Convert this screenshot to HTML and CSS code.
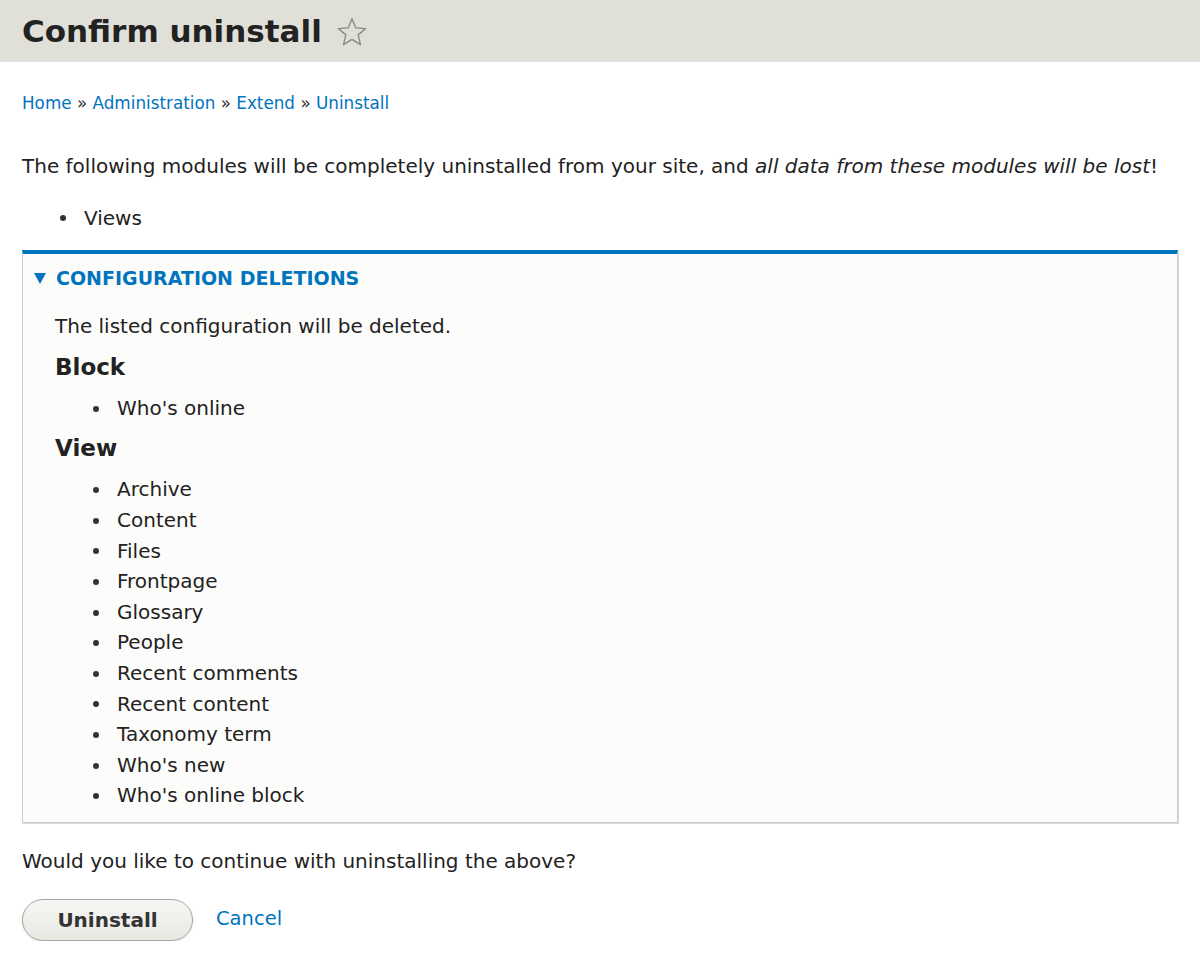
FILE: index.html
```html
<!DOCTYPE html>
<html>
<head>
<meta charset="utf-8">
<link rel="stylesheet" href="styles.css">
</head>
<body>
<header class="page-header">
  <h1 class="page-title">Confirm uninstall</h1>
  <svg class="star" width="30" height="30" viewBox="0 0 30 30" aria-hidden="true">
    <path d="M15 1.8 L18.8 10.9 L28.6 11.6 L21.1 17.9 L23.5 27.6 L15 22.4 L6.5 27.6 L8.9 17.9 L1.4 11.6 L11.2 10.9 Z" fill="none" stroke="#8a8a8a" stroke-width="1.4" stroke-linejoin="round"/>
  </svg>
</header>
<main class="content">
  <nav class="breadcrumb">
    <a href="#">Home</a> <span class="sep">»</span> <a href="#">Administration</a> <span class="sep">»</span> <a href="#">Extend</a> <span class="sep">»</span> <a href="#">Uninstall</a>
  </nav>
  <p class="intro">The following modules will be completely uninstalled from your site, and <em>all data from these modules will be lost</em>!</p>
  <ul class="list modules">
    <li>Views</li>
  </ul>
  <section class="details">
    <div class="summary"><span class="tri"></span>CONFIGURATION DELETIONS</div>
    <div class="details-body">
      <p class="desc">The listed configuration will be deleted.</p>
      <h3 class="group">Block</h3>
      <ul class="list">
        <li>Who's online</li>
      </ul>
      <h3 class="group">View</h3>
      <ul class="list">
        <li>Archive</li>
        <li>Content</li>
        <li>Files</li>
        <li>Frontpage</li>
        <li>Glossary</li>
        <li>People</li>
        <li>Recent comments</li>
        <li>Recent content</li>
        <li>Taxonomy term</li>
        <li>Who's new</li>
        <li>Who's online block</li>
      </ul>
    </div>
  </section>
  <p class="question">Would you like to continue with uninstalling the above?</p>
  <div class="actions">
    <button class="button" type="button">Uninstall</button>
    <a class="cancel" href="#">Cancel</a>
  </div>
</main>
</body>
</html>
```

FILE: styles.css
```css
html, body {
  margin: 0;
  padding: 0;
  background: #fff;
}
body {
  font-family: "DejaVu Sans", "Lucida Grande", Verdana, sans-serif;
  font-size: 20px;
  color: #222;
  line-height: 30.6px;
}
a {
  color: #0074bd;
  text-decoration: none;
}
.page-header {
  background: #e0e0d8;
  height: 62px;
  display: flex;
  align-items: center;
  padding: 0 22px;
  gap: 15px;
}
.page-title {
  margin: 0;
  font-size: 31px;
  font-weight: bold;
  color: #222;
  line-height: 1;
}
.star {
  display: block;
  margin-top: 1px;
}
.content {
  padding: 0 22px;
}
.breadcrumb {
  margin-top: 28px;
  font-size: 16.8px;
  line-height: 26px;
}
.breadcrumb .sep {
  color: #333;
}
.intro {
  margin: 35px 0 0;
}
.list {
  margin: 0;
  padding-left: 38px;
  list-style: none;
}
.list li {
  display: flex;
  align-items: center;
  line-height: 30.6px;
}
.list li::before {
  content: "";
  width: 6px;
  height: 6px;
  border-radius: 50%;
  background: #333;
  margin-right: 18px;
  margin-top: 1px;
  flex: none;
}
.modules {
  margin-top: 21px;
}
.details {
  margin-top: 17px;
  border: 1px solid #ccc;
  border-top: 4px solid #0074bd;
  background: #fcfcfa;
  box-shadow: 1px 1px 0 #d6d6d6;
}
.summary {
  display: flex;
  align-items: center;
  padding: 10px 11px 0;
  height: 38px;
  box-sizing: border-box;
  color: #0074bd;
  font-weight: bold;
  font-size: 19px;
}
.tri {
  width: 0;
  height: 0;
  border-left: 6px solid transparent;
  border-right: 6px solid transparent;
  border-top: 11px solid #0074bd;
  margin-right: 10px;
}
.details-body {
  padding: 19px 32px 11px;
}
.desc {
  margin: 0;
}
.group {
  margin: 5px 0 6px;
  font-size: 23px;
  font-weight: bold;
  line-height: 40px;
}
.question {
  margin: 23px 0 0;
}
.actions {
  margin-top: 22px;
  display: flex;
  align-items: center;
  gap: 23px;
}
.button {
  width: 171px;
  height: 42px;
  border: 1px solid #a6a6a6;
  border-radius: 21px;
  background: linear-gradient(#f6f6f3, #e8e8e3);
  font-family: inherit;
  font-size: 20px;
  font-weight: bold;
  color: #333;
  box-shadow: 0 1px 2px rgba(0,0,0,0.12);
}
.cancel {
  font-size: 19.5px;
}
```
